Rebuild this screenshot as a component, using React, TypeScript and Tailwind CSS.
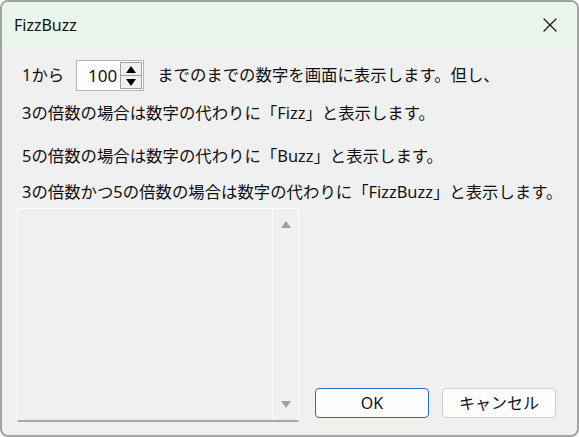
import { X } from 'lucide-react'

const font = { fontFamily: '"Noto Sans", "Noto Sans CJK JP", sans-serif' }

function Tri({ down }: { down?: boolean }) {
  return (
    <svg width="10" height="7" viewBox="0 0 10 7" className="block">
      <polygon points={down ? '0,0 10,0 5,7' : '5,0 10,7 0,7'} fill="currentColor" />
    </svg>
  )
}

export default function App() {
  return (
    <div
      className="flex h-[437px] w-[579px] flex-col overflow-hidden rounded-[8px] border-2 border-[#a3a3a3] bg-[#f0f0f0] text-[#111]"
      style={font}
    >
      <div className="flex h-[45px] shrink-0 items-center justify-between bg-[#eaf6ec] pl-[12px] pr-[15px]">
        <span className="text-[16px]">FizzBuzz</span>
        <X size={24} strokeWidth={1.3} className="text-[#1a1a1a]" />
      </div>

      <div className="flex flex-1 flex-col pl-[20px] text-[16.4px]">
        <div className="mt-[13px] flex h-[31px] items-center">
          <span>1から</span>
          <div className="ml-[12px] flex h-[31px] w-[68px] items-stretch border border-[#b4b4b4] bg-white">
            <span className="flex flex-1 items-center justify-end pr-[3px] text-[17px]">100</span>
            <div className="my-[1px] mr-[1px] flex w-[22px] flex-col border border-[#a0a0a0] bg-[#f0f0f0] text-black">
              <div className="flex flex-1 items-center justify-center border-b border-[#a0a0a0]">
                <Tri />
              </div>
              <div className="flex flex-1 items-center justify-center">
                <Tri down />
              </div>
            </div>
          </div>
          <span className="ml-[13px]">までのまでの数字を画面に表示します。但し、</span>
        </div>
        <p className="mt-[10px] leading-[24px]">3の倍数の場合は数字の代わりに「Fizz」と表示します。</p>
        <p className="mt-[19px] leading-[24px]">5の倍数の場合は数字の代わりに「Buzz」と表示します。</p>
        <p className="mt-[12px] leading-[24px]">3の倍数かつ5の倍数の場合は数字の代わりに「FizzBuzz」と表示します。</p>

        <div className="mt-[4px] flex items-end">
          <div className="-ml-[5px] flex h-[214px] w-[282px] border-x border-t border-b-2 border-x-white border-t-white border-b-[#a8a8a8]">
            <div className="flex-1" />
            <div className="flex w-[26px] flex-col items-center justify-between border-l border-white py-[12px] text-[#a0a0a0]">
              <Tri />
              <Tri down />
            </div>
          </div>
          <div className="mb-[4px] ml-[16px] flex gap-[13px] text-[16px]">
            <button className="h-[30px] w-[114px] rounded-[4px] border border-[#1f6fc0] bg-[#fdfdfd]">
              OK
            </button>
            <button className="h-[30px] w-[114px] rounded-[4px] border border-[#d0d0d0] bg-[#fdfdfd]">
              キャンセル
            </button>
          </div>
        </div>
      </div>
    </div>
  )
}
